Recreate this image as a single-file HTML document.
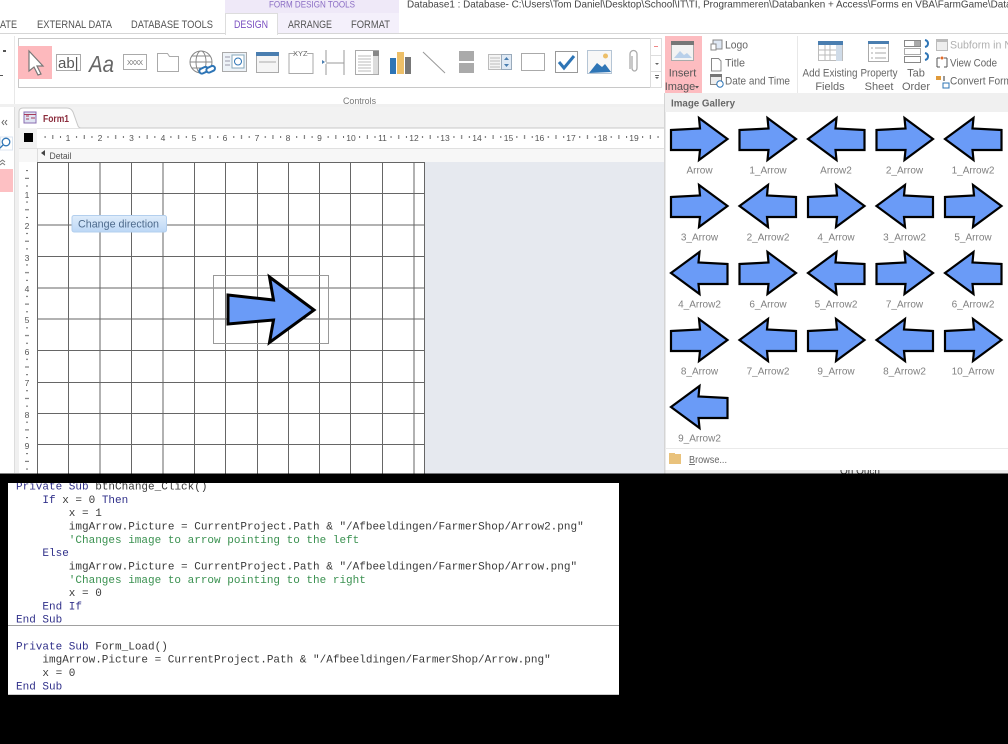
<!DOCTYPE html>
<html><head><meta charset="utf-8"><title>Form design</title>
<style>
html,body{margin:0;padding:0;background:#000;width:1008px;height:744px;overflow:hidden}
svg{display:block;filter:blur(0.3px)}
text{font-family:"Liberation Sans",sans-serif}
.tab{font-size:11px;fill:#555}
.lbl{font-size:11px;fill:#666}
.g{font-size:10px;fill:#808080;text-anchor:middle}
.c{font-family:"Liberation Mono",monospace;font-size:11px;fill:#3a3a3a}
.k{fill:#30308a}
.m{fill:#3a9150}
.n{font-size:8.5px;fill:#555;text-anchor:middle}
</style></head><body>
<svg width="1008" height="744" viewBox="0 0 1008 744" xmlns="http://www.w3.org/2000/svg">
<defs>
<g id="r"><polygon points="1.5,14 30.5,12.5 29.5,2 58,23 29.5,44 30.5,34 1.5,34" fill="#6a9bf7" stroke="#000" stroke-width="2.2" stroke-linejoin="miter"/></g>
<g id="l"><polygon points="58,14 29,12.5 30,2 1.5,23 30,44 29,34 58,34" fill="#6a9bf7" stroke="#000" stroke-width="2.2" stroke-linejoin="miter"/></g>
<pattern id="hr" x="37" y="128" width="31.45" height="20" patternUnits="userSpaceOnUse">
<rect x="7.6" y="8" width="1" height="2" fill="#666"/><rect x="15.3" y="7" width="1" height="4" fill="#666"/><rect x="23" y="8" width="1" height="2" fill="#666"/>
</pattern>
<pattern id="vr" x="19" y="162.5" width="20" height="31.45" patternUnits="userSpaceOnUse">
<rect x="7" y="7.6" width="2" height="1" fill="#666"/><rect x="6" y="15.3" width="4" height="1" fill="#666"/><rect x="7" y="23" width="2" height="1" fill="#666"/>
</pattern>
<clipPath id="cp"><rect x="8" y="483" width="611" height="212"/></clipPath>
<clipPath id="top"><rect x="0" y="0" width="1008" height="473.5"/></clipPath>
<linearGradient id="b" x1="0" y1="0" x2="0" y2="1"><stop offset="0" stop-color="#dfecfa"/><stop offset="1" stop-color="#bcd7f6"/></linearGradient>
</defs>

<rect width="1008" height="744" fill="#000"/>
<g clip-path="url(#top)">
<rect width="1008" height="474" fill="#fff"/>

<!-- title / tabs -->
<rect x="225" y="0" width="174" height="33" fill="#f4f0fb"/>
<rect x="225" y="0" width="174" height="13" fill="#efe9f8"/>
<text x="269" y="7.5" font-size="9" fill="#8a6cc4" textLength="86" lengthAdjust="spacingAndGlyphs">FORM DESIGN TOOLS</text>
<text x="407" y="7.5" font-size="10.5" fill="#444" textLength="626" lengthAdjust="spacingAndGlyphs">Database1 : Database- C:\Users\Tom Daniel\Desktop\School\IT\TI, Programmeren\Databanken + Access\Forms en VBA\FarmGame\Database</text>
<rect x="0" y="33" width="1008" height="1" fill="#d6d6d6"/>
<rect x="225.5" y="13.5" width="52" height="21" fill="#fff" stroke="#ddd"/>
<rect x="226" y="32" width="51" height="3" fill="#fff"/>
<text class="tab" x="0" y="28" textLength="17" lengthAdjust="spacingAndGlyphs">ATE</text>
<text class="tab" x="37" y="28" textLength="75" lengthAdjust="spacingAndGlyphs">EXTERNAL DATA</text>
<text class="tab" x="131" y="28" textLength="82" lengthAdjust="spacingAndGlyphs">DATABASE TOOLS</text>
<text class="tab" x="234" y="28" textLength="34" lengthAdjust="spacingAndGlyphs" style="fill:#7a4fc0">DESIGN</text>
<text class="tab" x="288" y="28" textLength="44" lengthAdjust="spacingAndGlyphs">ARRANGE</text>
<text class="tab" x="351" y="28" textLength="39" lengthAdjust="spacingAndGlyphs">FORMAT</text>

<!-- ribbon -->
<rect x="0" y="104" width="1008" height="3" fill="#f0f0f0"/>
<rect x="14" y="36" width="1" height="68" fill="#e8e8e8"/>
<rect x="3" y="50" width="3" height="2" fill="#555"/><rect x="0" y="75" width="3" height="1" fill="#555"/>
<rect x="18.5" y="38.5" width="632" height="49" fill="#fff" stroke="#c8c8c8"/>
<rect x="650.5" y="38.5" width="11" height="49" fill="#fff" stroke="#ddd"/>
<rect x="650" y="55" width="12" height="1" fill="#ddd"/><rect x="650" y="71" width="12" height="1" fill="#ddd"/>
<path d="M655 63h4l-2 2zM655 77h4l-2 2zM655 75h4v1h-4z" fill="#666"/>
<rect x="654" y="46" width="4" height="1" fill="#e88"/>
<rect x="18" y="46" width="34" height="33" fill="#fdb9bd"/>
<path d="M29 51v20l5-4 4 8 3-1-4-8h6z" fill="#fff" stroke="#777" stroke-width="1.2"/>
<rect x="56.5" y="54.5" width="24" height="16" fill="#fff" stroke="#aaa"/>
<text x="58" y="68" font-size="15" fill="#555">ab|</text>
<text x="89" y="72" font-size="23" font-style="italic" fill="#666" textLength="25" lengthAdjust="spacingAndGlyphs">Aa</text>
<rect x="123.5" y="54.5" width="23" height="15" fill="#fff" stroke="#aaa"/>
<text x="127" y="65" font-size="7" fill="#777" textLength="16">XXXX</text>
<path d="M157.5 53.5h10l2 3h9v15h-21z" fill="#fff" stroke="#aaa"/>
<circle cx="201" cy="62" r="11" fill="#fff" stroke="#888"/>
<ellipse cx="201" cy="62" rx="5" ry="11" fill="none" stroke="#888"/>
<path d="M190 62h22M192 56h18M192 68h18" stroke="#888" fill="none"/>
<rect x="199" y="68" width="9" height="5" rx="2.5" fill="#fff" stroke="#2e75b6" stroke-width="2" transform="rotate(-25 203 70)"/>
<rect x="206" y="67" width="9" height="5" rx="2.5" fill="#fff" stroke="#2e75b6" stroke-width="2" transform="rotate(-25 210 69)"/>
<rect x="222.5" y="52.5" width="24" height="19" fill="#eef3f8" stroke="#aaa"/>
<rect x="232" y="55" width="12" height="13" fill="#fff" stroke="#8ab"/>
<circle cx="238" cy="61.5" r="3.5" fill="none" stroke="#2e75b6"/>
<path d="M225 57h5M225 61h5M225 65h5" stroke="#99a"/>
<rect x="256.5" y="52.5" width="22" height="20" fill="#f5f5f5" stroke="#aaa"/>
<rect x="256" y="52" width="23" height="4" fill="#4a7eb0"/>
<path d="M259 62h17" stroke="#aaa"/>
<path d="M295 53.5h-6v20h24v-20h-6" fill="none" stroke="#aaa"/>
<text x="293" y="56" font-size="7.5" fill="#666">XYZ</text>
<path d="M326 50v12M326 63h18M326 64v11M344 50v25" stroke="#999" fill="none"/>
<path d="M322 60l3 2-3 2z" fill="#4a7eb0"/>
<rect x="355.5" y="50.5" width="23" height="24" fill="#fff" stroke="#aaa"/>
<path d="M358 56h13M358 59h13M358 62h13M358 65h13M358 68h13M358 71h13" stroke="#bbb"/>
<rect x="373" y="51" width="5" height="23" fill="#ddd"/><rect x="373" y="51" width="6" height="5" fill="#888"/>
<rect x="390" y="58" width="6" height="16" fill="#2e75b6"/><rect x="397" y="52" width="7" height="22" fill="#edbf68"/><rect x="405" y="57" width="6" height="17" fill="#777"/>
<path d="M423 52l22 21" stroke="#999" fill="none"/>
<rect x="459" y="51" width="15" height="10" fill="#aaa"/><rect x="459" y="63" width="15" height="10" fill="#aaa"/>
<rect x="488.5" y="54.5" width="13" height="15" fill="#f4f4f4" stroke="#bbb"/>
<rect x="501.5" y="54.5" width="10" height="15" fill="#dfe9f4" stroke="#9ab"/>
<path d="M490 58h10M490 61h10M490 64h10M490 67h10" stroke="#bbb"/>
<path d="M504 60l2.5-3 2.5 3zM504 64l2.5 3 2.5-3z" fill="#4a7eb0"/>
<rect x="521.5" y="53.5" width="23" height="17" fill="#fff" stroke="#aaa"/>
<rect x="555.5" y="51.5" width="22" height="21" fill="#fff" stroke="#999"/>
<path d="M559 62l5 6 10-12" fill="none" stroke="#2e75b6" stroke-width="3"/>
<rect x="587.5" y="50.5" width="24" height="23" fill="#f7f7f7" stroke="#b5c5d5"/>
<path d="M589 73l8-10 5 4 3-3 6 8z" fill="#2e75b6"/><circle cx="605.5" cy="56" r="2.5" fill="#edbf68"/>
<path d="M631 56v12a2.5 3 0 0 0 5 0V54a3.5 3.5 0 0 0-7 0v15" fill="none" stroke="#aaa" stroke-width="1.3" transform="translate(1 0)"/>
<text x="343" y="104" font-size="9.5" fill="#777" textLength="33" lengthAdjust="spacingAndGlyphs">Controls</text>

<!-- Form area -->
<rect x="14" y="107" width="651" height="21" fill="#f2f2f2"/>
<rect x="14" y="107" width="5" height="366" fill="#f0f0f0"/>
<rect x="0" y="107" width="14" height="366" fill="#fff"/>
<rect x="14" y="107" width="1" height="366" fill="#ddd"/>
<path d="M19 128v-16q0-4 4-4h44q4 0 6 4l5 14q1 2 3 2h584" fill="#fff" stroke="#c8c8c8"/>
<rect x="24" y="112" width="12" height="11" fill="#dfe4f2" stroke="#8a6cb0"/>
<path d="M26 116h3M26 119h3M31 118h4M24 114.5h12" stroke="#a83a5a"/>
<text x="43" y="122" font-size="10" font-weight="bold" fill="#8b2c3c" textLength="26" lengthAdjust="spacingAndGlyphs">Form1</text>
<path d="M4 120l-2 2.500 2 2.500M7 120l-2 2.500 2 2.500" fill="none" stroke="#666"/>
<rect x="0.5" y="137" width="12" height="13" fill="#fff" stroke="#dce6f0"/>
<circle cx="6" cy="142" r="3.8" fill="#fff" stroke="#2e75b6" stroke-width="1.3"/><path d="M3 145l-3 3" stroke="#2e75b6" stroke-width="1.3"/>
<path d="M0 162l2.5-2 2.5 2M0 165l2.5-2 2.5 2" fill="none" stroke="#777"/>
<rect x="0" y="169" width="13" height="23" fill="#fdc0c3"/>
<rect x="19" y="128" width="646" height="20" fill="#fff"/>
<rect x="19" y="128" width="646" height="1" fill="#e4e4e4"/>
<rect x="37" y="128" width="628" height="20" fill="url(#hr)"/>
<rect x="19" y="128" width="18" height="20" fill="#f2f2f2"/>
<rect x="24" y="133" width="9" height="9" fill="#000"/>
<text class="n" x="68" y="141">1</text><text class="n" x="100" y="141">2</text><text class="n" x="131.5" y="141">3</text><text class="n" x="163" y="141">4</text><text class="n" x="194" y="141">5</text><text class="n" x="225" y="141">6</text><text class="n" x="257" y="141">7</text><text class="n" x="288" y="141">8</text><text class="n" x="319.5" y="141">9</text><text class="n" x="351" y="141">10</text><text class="n" x="382.5" y="141">11</text><text class="n" x="414" y="141">12</text><text class="n" x="445" y="141">13</text><text class="n" x="477" y="141">14</text><text class="n" x="508.5" y="141">15</text><text class="n" x="539.5" y="141">16</text><text class="n" x="571" y="141">17</text><text class="n" x="602.5" y="141">18</text><text class="n" x="634" y="141">19</text>
<rect x="19" y="148" width="646" height="14" fill="#f7f7f7"/>
<rect x="19" y="148" width="646" height="1" fill="#e0e0e0"/>
<rect x="37" y="148" width="1" height="14" fill="#ddd"/>
<path d="M41 153l4-3v6z" fill="#444"/>
<text x="49.5" y="159" font-size="9" fill="#555" textLength="22" lengthAdjust="spacingAndGlyphs">Detail</text>
<rect x="19" y="162" width="18" height="312" fill="#fff"/>
<rect x="19" y="162" width="18" height="312" fill="url(#vr)"/>
<text class="n" x="27" y="198">1</text><text class="n" x="27" y="229">2</text><text class="n" x="27" y="261">3</text><text class="n" x="27" y="292">4</text><text class="n" x="27" y="323">5</text><text class="n" x="27" y="355">6</text><text class="n" x="27" y="386">7</text><text class="n" x="27" y="418">8</text><text class="n" x="27" y="449">9</text>

<rect x="425" y="162" width="240" height="312" fill="#e6e9ef"/>
<rect x="37.5" y="162" width="387" height="312" fill="#fff"/>
<path d="M37.5 162.5H425M37.5 193.5H425M37.5 225H425M37.5 256.5H425M37.5 288H425M37.5 319H425M37.5 350.5H425M37.5 382.5H425M37.5 413.5H425M37.5 444.5H425" stroke="#666" fill="none"/>
<path d="M37.5 162V474M68.5 162V474M100 162V474M131.5 162V474M163 162V474M194.5 162V474M225.5 162V474M257.5 162V474M288.5 162V474M319.5 162V474M350.5 162V474M382.5 162V474M414 162V474M424.5 162V474" stroke="#666" fill="none"/>

<rect x="72" y="215.5" width="94.5" height="16.5" rx="2" fill="url(#b)" stroke="#b3cfee"/>
<text x="78" y="227.5" font-size="11" fill="#4d6a8c" textLength="81" lengthAdjust="spacingAndGlyphs">Change direction</text>

<rect x="213.5" y="275.5" width="115" height="68" fill="none" stroke="#999"/>
<polygon points="228,295 273.5,300 269.5,277 314,310 269.5,342.5 273.5,320 228,324" fill="#6a9bf7" stroke="#000" stroke-width="3"/>

<!-- Right ribbon -->
<rect x="662" y="36" width="346" height="60" fill="#fff"/>
<rect x="665" y="36" width="37" height="58" fill="#fdbcc0"/>
<rect x="671.5" y="41.5" width="22" height="19" fill="#f3f3f3" stroke="#aaa"/>
<rect x="671" y="41" width="23" height="4" fill="#777"/>
<path d="M674 58l6-7 4 4 3-2 5 5z" fill="#b9d0ea"/>
<text x="682.5" y="76.5" font-size="11" fill="#555" text-anchor="middle">Insert</text>
<text x="680" y="90" font-size="11" fill="#555" text-anchor="middle">Image</text>
<path d="M695 86h4l-2 2.500z" fill="#555"/>
<rect x="713" y="40" width="9" height="9" fill="#dfe8f4" stroke="#888"/><rect x="711" y="44" width="5" height="6" fill="#fff" stroke="#888"/>
<path d="M711.5 58.5h7l2.5 2.500v10h-9.5z" fill="#fff" stroke="#888"/>
<rect x="710.5" y="74.5" width="11" height="10" fill="#eee" stroke="#888"/><rect x="710" y="74" width="12" height="3" fill="#777"/>
<circle cx="720" cy="84" r="3.2" fill="#fff" stroke="#2e75b6"/>
<text class="lbl" x="725" y="48.5" textLength="23" lengthAdjust="spacingAndGlyphs">Logo</text>
<text class="lbl" x="725" y="66.5" textLength="20" lengthAdjust="spacingAndGlyphs">Title</text>
<text class="lbl" x="725" y="84.5" textLength="65" lengthAdjust="spacingAndGlyphs">Date and Time</text>
<rect x="797" y="36" width="1" height="58" fill="#e8e8e8"/>

<rect x="818.5" y="41.5" width="24" height="19" fill="#fff" stroke="#bbb"/>
<rect x="818" y="41" width="25" height="4" fill="#4a7eb0"/>
<rect x="836" y="41" width="6" height="20" fill="#cfdbe8"/><rect x="836" y="41" width="6" height="4" fill="#4a7eb0"/>
<path d="M819 50h17M819 55h17M825 45v15M830 45v15" stroke="#bbb"/>
<text class="lbl" x="830" y="76.5" text-anchor="middle" textLength="55" lengthAdjust="spacingAndGlyphs">Add Existing</text>
<text class="lbl" x="830" y="90" text-anchor="middle">Fields</text>
<rect x="868.5" y="41.5" width="20" height="20" fill="#fff" stroke="#aaa"/>
<rect x="868" y="41" width="21" height="3" fill="#4a7eb0"/>
<path d="M871 48h2M875 48h11M871 53h2M875 53h11M871 58h2M875 58h11" stroke="#aaa"/>
<text class="lbl" x="879" y="76.5" text-anchor="middle" textLength="37" lengthAdjust="spacingAndGlyphs">Property</text>
<text class="lbl" x="879" y="90" text-anchor="middle">Sheet</text>
<rect x="904.5" y="40.5" width="16" height="6" fill="#fff" stroke="#888"/><rect x="914" y="41" width="6" height="5" fill="#aaa"/>
<rect x="904.5" y="48.5" width="16" height="6" fill="#fff" stroke="#aaa"/>
<rect x="904.5" y="56.5" width="16" height="6" fill="#fff" stroke="#888"/>
<path d="M925 40c4 1 4 6 0 7M925 53c4 1 4 6 0 7" fill="none" stroke="#2e75b6" stroke-width="2"/>
<text class="lbl" x="916" y="76.5" text-anchor="middle">Tab</text>
<text class="lbl" x="916" y="90" text-anchor="middle">Order</text>
<rect x="936.5" y="39.5" width="11" height="11" fill="#eee" stroke="#bbb"/><rect x="936" y="39" width="12" height="3" fill="#bbb"/>
<path d="M937 58h3M944 58h3M937 67h3M944 67h3M937 58v9M947 58v9" stroke="#555" fill="none"/><circle cx="942" cy="58" r="1.5" fill="#e06a2a"/>
<rect x="936" y="76" width="5" height="4" fill="#e09a3a"/><rect x="943" y="83" width="6" height="5" fill="#fff" stroke="#2e75b6"/><path d="M944 76v5" stroke="#333"/>
<text x="950" y="48.5" font-size="11" fill="#b0b0b0" textLength="62" lengthAdjust="spacingAndGlyphs">Subform in N</text>
<text class="lbl" x="950" y="66.5" textLength="47" lengthAdjust="spacingAndGlyphs">View Code</text>
<text class="lbl" x="950" y="84.5" textLength="62" lengthAdjust="spacingAndGlyphs">Convert Form</text>

<!-- Gallery -->
<rect x="665" y="93" width="343" height="381" fill="#ececec"/>
<text x="840" y="474" font-size="9" fill="#333" textLength="40" lengthAdjust="spacingAndGlyphs">On Ouch</text>
<rect x="665" y="93" width="343" height="377" fill="#fff"/>
<rect x="664" y="93" width="1.5" height="381" fill="#d4d4d4"/>
<rect x="665" y="93" width="343" height="19" fill="#f0f0f0"/>
<text x="671" y="106.5" font-size="10" font-weight="bold" fill="#666" textLength="64" lengthAdjust="spacingAndGlyphs">Image Gallery</text>

<use href="#r" x="669.5" y="116"/><use href="#r" x="738" y="116"/><use href="#l" x="806.5" y="116"/><use href="#r" x="875" y="116"/><use href="#l" x="943.5" y="116"/>
<use href="#r" x="669.5" y="183"/><use href="#l" x="738" y="183"/><use href="#r" x="806.5" y="183"/><use href="#l" x="875" y="183"/><use href="#r" x="943.5" y="183"/>
<use href="#l" x="669.5" y="250"/><use href="#r" x="738" y="250"/><use href="#l" x="806.5" y="250"/><use href="#r" x="875" y="250"/><use href="#l" x="943.5" y="250"/>
<use href="#r" x="669.5" y="317"/><use href="#l" x="738" y="317"/><use href="#r" x="806.5" y="317"/><use href="#l" x="875" y="317"/><use href="#r" x="943.5" y="317"/>
<use href="#l" x="669.5" y="384"/>

<text class="g" x="699.5" y="173.5">Arrow</text><text class="g" x="768" y="173.5">1_Arrow</text><text class="g" x="836" y="173.5">Arrow2</text><text class="g" x="904.5" y="173.5">2_Arrow</text><text class="g" x="973" y="173.5">1_Arrow2</text>
<text class="g" x="699.5" y="240.5">3_Arrow</text><text class="g" x="768" y="240.5">2_Arrow2</text><text class="g" x="836" y="240.5">4_Arrow</text><text class="g" x="904.5" y="240.5">3_Arrow2</text><text class="g" x="973" y="240.5">5_Arrow</text>
<text class="g" x="699.5" y="307.5">4_Arrow2</text><text class="g" x="768" y="307.5">6_Arrow</text><text class="g" x="836" y="307.5">5_Arrow2</text><text class="g" x="904.5" y="307.5">7_Arrow</text><text class="g" x="973" y="307.5">6_Arrow2</text>
<text class="g" x="699.5" y="374.5">8_Arrow</text><text class="g" x="768" y="374.5">7_Arrow2</text><text class="g" x="836" y="374.5">9_Arrow</text><text class="g" x="904.5" y="374.5">8_Arrow2</text><text class="g" x="973" y="374.5">10_Arrow</text>
<text class="g" x="699.5" y="441.5">9_Arrow2</text>

<rect x="665" y="448" width="343" height="1" fill="#eaeaea"/>
<rect x="669" y="454" width="12" height="10" fill="#e9c27c"/><rect x="669" y="453" width="6" height="2" fill="#e9c27c"/>
<text x="689" y="463" font-size="10" fill="#666" textLength="38" lengthAdjust="spacingAndGlyphs">Browse...</text>
<rect x="689" y="464" width="6" height="1" fill="#777"/>
</g>

<!-- Code panel -->
<rect x="8" y="483" width="611" height="212" fill="#fff"/>
<rect x="8" y="625" width="611" height="1" fill="#a0a0a0"/>
<rect x="8" y="694" width="611" height="1" fill="#ccc"/>
<g clip-path="url(#cp)">
<text class="c" xml:space="preserve" x="16" y="489.5"><tspan class="k">Private Sub</tspan> btnChange_Click()</text>
<text class="c" xml:space="preserve" x="42.4" y="502.8"><tspan class="k">If</tspan> x = 0 <tspan class="k">Then</tspan></text>
<text class="c" xml:space="preserve" x="68.8" y="516.1">x = 1</text>
<text class="c" xml:space="preserve" x="68.8" y="529.4">imgArrow.Picture = CurrentProject.Path &amp; "/Afbeeldingen/FarmerShop/Arrow2.png"</text>
<text class="c m" xml:space="preserve" x="68.8" y="542.8">'Changes image to arrow pointing to the left</text>
<text class="c k" xml:space="preserve" x="42.4" y="556.1">Else</text>
<text class="c" xml:space="preserve" x="68.8" y="569.4">imgArrow.Picture = CurrentProject.Path &amp; "/Afbeeldingen/FarmerShop/Arrow.png"</text>
<text class="c m" xml:space="preserve" x="68.8" y="582.8">'Changes image to arrow pointing to the right</text>
<text class="c" xml:space="preserve" x="68.8" y="596.1">x = 0</text>
<text class="c k" xml:space="preserve" x="42.4" y="609.4">End If</text>
<text class="c k" xml:space="preserve" x="16" y="622.7">End Sub</text>
<text class="c" xml:space="preserve" x="16" y="649.3"><tspan class="k">Private Sub</tspan> Form_Load()</text>
<text class="c" xml:space="preserve" x="42.4" y="662.6">imgArrow.Picture = CurrentProject.Path &amp; "/Afbeeldingen/FarmerShop/Arrow.png"</text>
<text class="c" xml:space="preserve" x="42.4" y="676">x = 0</text>
<text class="c k" xml:space="preserve" x="16" y="689.3">End Sub</text>
</g>
</svg>
</body></html>
